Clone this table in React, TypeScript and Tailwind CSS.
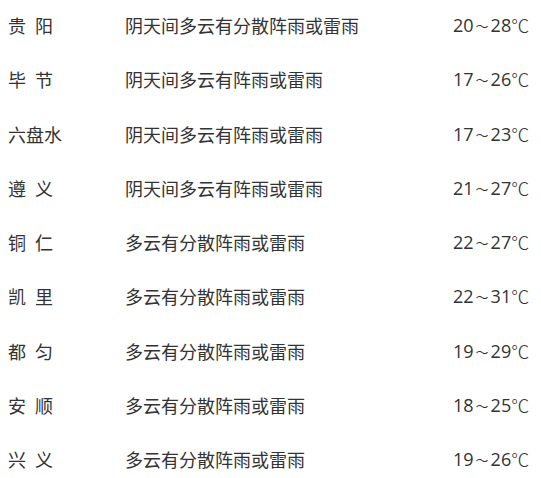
import React from "react";

const rows: [string, string, string, string][] = [
  ["贵 阳", "阴天间多云有分散阵雨或雷雨", "20", "28"],
  ["毕 节", "阴天间多云有阵雨或雷雨", "17", "26"],
  ["六盘水", "阴天间多云有阵雨或雷雨", "17", "23"],
  ["遵 义", "阴天间多云有阵雨或雷雨", "21", "27"],
  ["铜 仁", "多云有分散阵雨或雷雨", "22", "27"],
  ["凯 里", "多云有分散阵雨或雷雨", "22", "31"],
  ["都 匀", "多云有分散阵雨或雷雨", "19", "29"],
  ["安 顺", "多云有分散阵雨或雷雨", "18", "25"],
  ["兴 义", "多云有分散阵雨或雷雨", "19", "26"],
];

const digitFont = { fontFamily: '"Open Sans", "Noto Sans CJK SC", sans-serif' };

export default function App() {
  return (
    <div
      className="w-[541px] h-[478px] bg-white text-[#333] text-[18px] overflow-hidden"
      style={{ fontFamily: '"Microsoft YaHei", "Noto Sans CJK SC", sans-serif' }}
    >
      <div className="mt-[-1.5px]">
        {rows.map(([city, weather, lo, hi]) => (
          <div key={city} className="flex items-center h-[54.25px]">
            <div className="w-[125px] pl-[8px] whitespace-pre [word-spacing:5px]">{city}</div>
            <div className="w-[328px]">{weather}</div>
            <div className="whitespace-nowrap flex items-center">
              <span style={digitFont}>{lo}</span>
              <span className="inline-block w-[17px] text-center text-[13px] leading-none">～</span>
              <span style={digitFont}>{hi}</span>
              <span className="font-light">℃</span>
            </div>
          </div>
        ))}
      </div>
    </div>
  );
}
